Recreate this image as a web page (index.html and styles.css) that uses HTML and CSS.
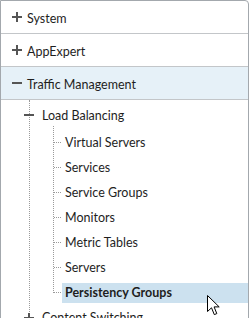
FILE: index.html
```html
<!DOCTYPE html>
<html lang="en">
<head>
    <meta charset="UTF-8">
    <meta name="viewport" content="width=device-width, initial-scale=1.0">
    <title>Navigation</title>
    <link rel="stylesheet" href="styles.css">
</head>
<body>

    <div class="panel">
        <!-- top level sections -->
        <div class="section"><span class="toggle plus"></span><span>System</span></div>
        <div class="section"><span class="toggle plus"></span><span>AppExpert</span></div>
        <div class="section open"><span class="toggle minus"></span><span>Traffic Management</span></div>

        <div class="tree">
            <div class="node">
                <div class="node-row"><span class="toggle minus"></span><span>Load Balancing</span></div>
                <ul class="leaves">
                    <li><span class="leaf">Virtual Servers</span></li>
                    <li><span class="leaf">Services</span></li>
                    <li><span class="leaf">Service Groups</span></li>
                    <li><span class="leaf">Monitors</span></li>
                    <li><span class="leaf">Metric Tables</span></li>
                    <li><span class="leaf">Servers</span></li>
                    <li><span class="leaf selected">Persistency Groups</span></li>
                </ul>
            </div>
            <div class="node">
                <div class="node-row"><span class="toggle plus"></span><span>Content Switching</span></div>
            </div>
        </div>

        <!-- mouse pointer -->
        <svg class="cursor" width="14" height="22" viewBox="0 0 14 22">
            <path d="M0.5 0.5 L0.5 16.5 L4.5 12.8 L7.3 19.6 L9.8 18.6 L7.1 11.9 L12.2 11.9 Z" fill="#fff" stroke="#000" stroke-width="1"/>
        </svg>
    </div>

</body>
</html>
```

FILE: styles.css
```css
body {
    margin: 0;
    font-family: Lato, "Open Sans", sans-serif;
    font-size: 12.5px;
    color: #1e1e1e;
    background: #fff;
    overflow: hidden;
}
.panel {
    position: relative;
    width: 247px;
    height: 330px;
    border: 1px solid #a3a8ad;
    border-top-right-radius: 4px;
    overflow: hidden;
}
.section {
    display: flex;
    align-items: center;
    gap: 5px;
    height: 32px;
    padding-left: 11px;
    border-bottom: 1px solid #c3c6c9;
}
.section span:last-child {
    padding-top: 2px;
}
.section.open {
    background: #e6f1f8;
}

/* plus / minus toggles */
.toggle {
    position: relative;
    display: inline-block;
    width: 10px;
    height: 10px;
    flex: none;
}
.toggle::before {
    content: "";
    position: absolute;
    left: 0;
    top: 4px;
    width: 10px;
    height: 2px;
    background: #555;
}
.toggle.plus::after {
    content: "";
    position: absolute;
    left: 4px;
    top: 0;
    width: 2px;
    height: 10px;
    background: #555;
}

.tree {
    margin-left: 28px;
    border-left: 1px dotted #9a9a9a;
}
.node-row {
    display: flex;
    align-items: center;
    gap: 8px;
    height: 30px;
    margin-left: -6px;
}
.node:last-child .node-row {
    height: 25px;
}
.leaves {
    list-style: none;
    position: relative;
    margin: 0 0 0 23px;
    padding: 0;
}
.leaves::before {
    content: "";
    position: absolute;
    left: 0;
    top: -4px;
    bottom: 12px;
    border-left: 1px dotted #9a9a9a;
}
.leaves li {
    position: relative;
    height: 25px;
    padding-left: 9px;
    display: flex;
    align-items: center;
}
.leaves li::before {
    content: "";
    position: absolute;
    left: 1px;
    top: 12px;
    width: 7px;
    border-top: 1px dotted #9a9a9a;
}
.leaf {
    flex: 1;
    padding-left: 3px;
    line-height: 20px;
}
.leaf.selected {
    background: #cce1ef;
    font-weight: bold;
}
.cursor {
    position: absolute;
    left: 206px;
    top: 294px;
}
```
